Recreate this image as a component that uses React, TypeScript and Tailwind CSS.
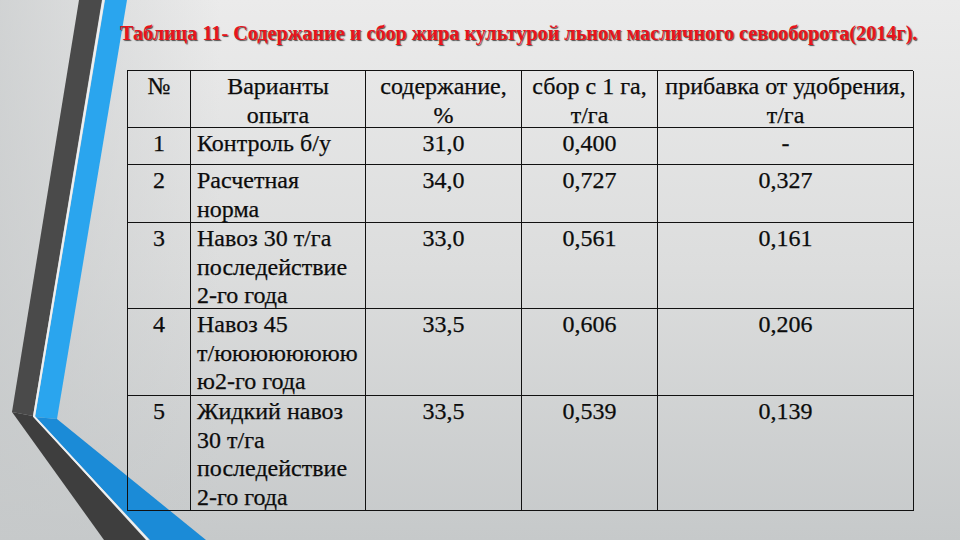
import React from "react";

type Row = { n: string; v: string[]; c: string; s: string; p: string; h: string };

const rows: Row[] = [
  { n: "1", v: ["Контроль б/у"], c: "31,0", s: "0,400", p: "-", h: "h-[37px]" },
  { n: "2", v: ["Расчетная", "норма"], c: "34,0", s: "0,727", p: "0,327", h: "h-[58px]" },
  { n: "3", v: ["Навоз 30 т/га", "последействие", "2-го года"], c: "33,0", s: "0,561", p: "0,161", h: "h-[86px]" },
  { n: "4", v: ["Навоз 45", "т/юююююююю", "ю2-го года"], c: "33,5", s: "0,606", p: "0,206", h: "h-[87px]" },
  { n: "5", v: ["Жидкий навоз", "30 т/га", "последействие", "2-го года"], c: "33,5", s: "0,539", p: "0,139", h: "h-[115px]" },
];

function Lines({ lines }: { lines: string[] }) {
  return (
    <>
      {lines.map((l, i) => (
        <div key={i} className="whitespace-nowrap">
          {l}
        </div>
      ))}
    </>
  );
}

const cell = "border-r border-b border-[#111] pt-[1px] overflow-visible";

export default function App() {
  return (
    <div className="relative w-[960px] h-[540px] overflow-hidden bg-gradient-to-b from-[#ebebeb] via-[#dcdddd] to-[#c6c9ca] [font-family:'Liberation_Serif','Times_New_Roman',serif]">
      <svg className="absolute inset-0" width="960" height="540" viewBox="0 0 960 540">
        <defs>
          <linearGradient id="bgl" x1="0" y1="0" x2="1" y2="0">
            <stop offset="0" stopColor="#c6c9ca" stopOpacity="0.7" />
            <stop offset="1" stopColor="#c6c9ca" stopOpacity="0" />
          </linearGradient>
        </defs>
        <rect x="0" y="0" width="220" height="540" fill="url(#bgl)" />
        <polygon points="79,0 102,0 33,416 12,412" fill="#4a4a4a" />
        <polygon points="12,412 33,416 146,540 104,540" fill="#3e3e3e" />
        <polygon points="105,0 127,0 57,419 35,417" fill="#2aa5ee" />
        <polygon points="35,417 57,419 206,540 150,540" fill="#1b8bd7" />
        <polyline points="103.5,0 34,416.5 148,540" fill="none" stroke="#eef0f1" strokeWidth="2" />
      </svg>

      <div className="relative">
        <div className="pt-[21px] pl-[120px] text-[20.2px] leading-[24px] font-bold text-[#e8141c] whitespace-nowrap [text-shadow:1px_1px_1px_rgba(40,40,40,0.8)]">
          Таблица 11- Содержание и сбор жира культурой льном масличного севооборота(2014г).
        </div>

        <div className="mt-[25px] ml-[127px] w-[786px] grid grid-cols-[63px_175px_156px_136px_256px] border-l border-t border-[#111] text-[24px] leading-[28.5px] text-[#0c0c0c] [-webkit-text-stroke:0.25px_#0c0c0c]">
          <div className={`${cell} h-[57px] text-center`}>№</div>
          <div className={`${cell} h-[57px] text-center`}>
            <Lines lines={["Варианты", "опыта"]} />
          </div>
          <div className={`${cell} h-[57px] text-center`}>
            <Lines lines={["содержание,", "%"]} />
          </div>
          <div className={`${cell} h-[57px] text-center`}>
            <Lines lines={["сбор с 1 га,", "т/га"]} />
          </div>
          <div className={`${cell} h-[57px] text-center`}>
            <Lines lines={["прибавка от удобрения,", "т/га"]} />
          </div>

          {rows.map((r) => (
            <React.Fragment key={r.n}>
              <div className={`${cell} ${r.h} text-center`}>{r.n}</div>
              <div className={`${cell} ${r.h} pl-[6px]`}>
                <Lines lines={r.v} />
              </div>
              <div className={`${cell} ${r.h} text-center`}>{r.c}</div>
              <div className={`${cell} ${r.h} text-center`}>{r.s}</div>
              <div className={`${cell} ${r.h} text-center`}>{r.p}</div>
            </React.Fragment>
          ))}
        </div>
      </div>
    </div>
  );
}
